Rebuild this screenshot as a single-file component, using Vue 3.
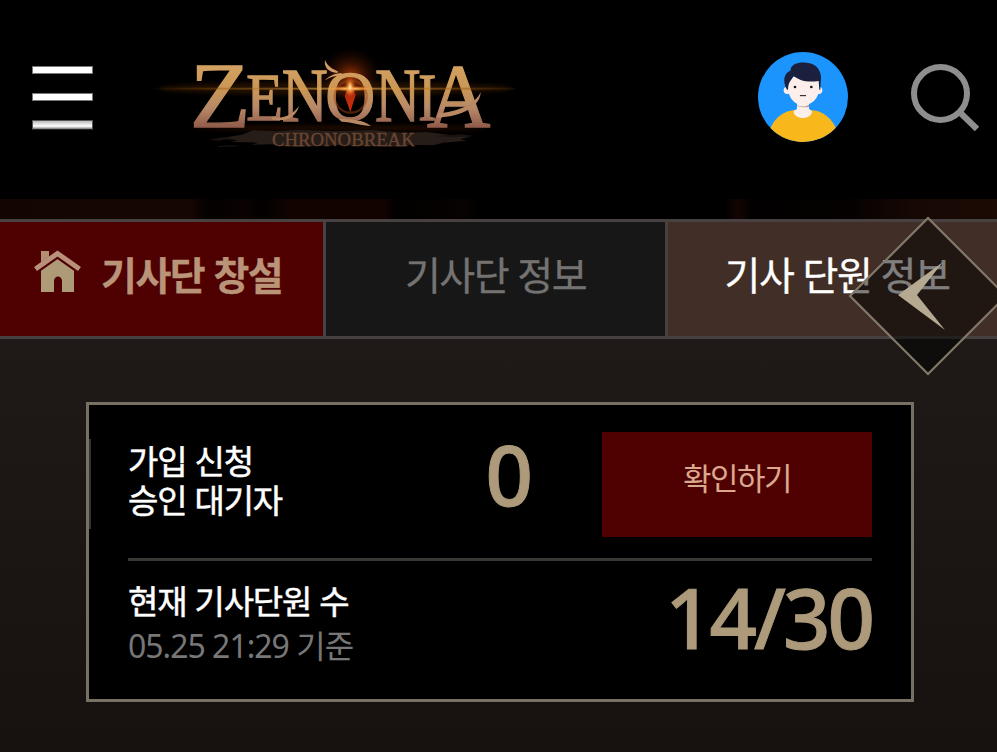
<script setup>
const menuBars = [0, 1, 2]
const letters = [
  { ch: 'Z', x: 134, y: 260, size: 282, w: 182 },
  { ch: 'E', x: 304, y: 239, size: 202, w: 110 },
  { ch: 'N', x: 410, y: 243, size: 226, w: 138 },
  { ch: 'O', x: 541, y: 241, size: 210, w: 150 },
  { ch: 'N', x: 690, y: 243, size: 226, w: 136 },
  { ch: 'I', x: 820, y: 239, size: 202, w: 54 },
  { ch: 'A', x: 846, y: 260, size: 276, w: 190 },
]
</script>

<template>
  <div class="page">
    <header class="header">
      <button class="menu" aria-label="menu">
        <span v-for="b in menuBars" :key="b" class="bar"></span>
      </button>

      <svg class="logo" viewBox="0 0 1140 360">
        <defs>
          <linearGradient id="gold" gradientUnits="userSpaceOnUse" x1="0" y1="75" x2="0" y2="262">
            <stop offset="0" stop-color="#d3a163" />
            <stop offset=".4" stop-color="#c99654" />
            <stop offset=".68" stop-color="#b98a68" />
            <stop offset="1" stop-color="#905b4a" />
          </linearGradient>
          <radialGradient id="fire">
            <stop offset="0" stop-color="#e0500a" stop-opacity=".75" />
            <stop offset=".45" stop-color="#a03205" stop-opacity=".35" />
            <stop offset="1" stop-color="#401000" stop-opacity="0" />
          </radialGradient>
          <radialGradient id="spark">
            <stop offset="0" stop-color="#fff6cc" />
            <stop offset=".35" stop-color="#f9a546" stop-opacity=".8" />
            <stop offset="1" stop-color="#e05a10" stop-opacity="0" />
          </radialGradient>
          <linearGradient id="flare">
            <stop offset="0" stop-color="#6a3804" stop-opacity=".1" />
            <stop offset=".15" stop-color="#8a4b09" stop-opacity=".7" />
            <stop offset=".54" stop-color="#ffc465" />
            <stop offset=".85" stop-color="#9a5a10" stop-opacity=".8" />
            <stop offset="1" stop-color="#6a3804" stop-opacity=".3" />
          </linearGradient>
          <linearGradient id="gem" x1="0" y1="0" x2="0" y2="1">
            <stop offset="0" stop-color="#ff9a50" />
            <stop offset=".4" stop-color="#b02a0c" />
            <stop offset="1" stop-color="#d62c08" />
          </linearGradient>
          <filter id="soft" x="-20%" y="-80%" width="140%" height="260%">
            <feGaussianBlur stdDeviation="7" />
          </filter>
        </defs>

        <ellipse cx="570" cy="145" rx="530" ry="20" fill="#3b1d03" opacity=".55" filter="url(#soft)" />
        <ellipse cx="617" cy="110" rx="95" ry="88" fill="url(#fire)" />
        <ellipse cx="590" cy="264" rx="440" ry="7" fill="#5a2006" opacity=".4" filter="url(#soft)" />

        <path
          d="M245 292l45-8 35-13 70 3 60-5 110 5 120-4 90 8 70-2 70 9 65 5-35 7 20 5-70 6-30 8-70-2-25 6-190-4-125 5-75-8-60 1 20-6-85-2 25-5-40-4z"
          fill="#261d18"
        />
        <path d="M190 299l45-7 30 3-45 7zM215 318l50-2 20 3-60 2zM870 288l75-5 45 5-70 4z" fill="#1a130f" />
        <text class="serif" x="381" y="319" font-size="58" textLength="428" lengthAdjust="spacingAndGlyphs" fill="#6b4531" stroke="#6b4531" stroke-width="1">CHRONOBREAK</text>

        <text class="serif title" fill="url(#gold)" stroke="url(#gold)">
          <tspan
            v-for="(l, i) in letters"
            :key="i"
            :x="l.x"
            :y="l.y"
            :font-size="l.size"
            :textLength="l.w"
            lengthAdjust="spacingAndGlyphs"
          >{{ l.ch }}</tspan>
        </text>

        <g fill="#d19a66">
          <path d="M576 99C552 96 536 84 540 60C548 80 562 86 580 95Z" />
          <path d="M540 121C552 108 568 100 590 99L588 107C566 107 552 113 540 121Z" />
          <path d="M380 231C415 239 446 222 462 197C456 228 424 249 380 238Z" fill="#b98964" />
          <path d="M580 236C620 238 655 238 678 258C650 257 622 246 590 245Z" fill="#b98964" />
          <path d="M882 220C930 216 990 196 1007 156C1006 200 950 230 876 233Z" fill="#b98964" />
        </g>
        <circle cx="617" cy="170" r="48" fill="none" stroke="#9c3f14" stroke-width="7" opacity=".5" />
        <path d="M615 125L632 165L616 216L599 168Z" fill="url(#gem)" />
        <rect x="22" y="143" width="1088" height="6" fill="url(#flare)" opacity=".6" />
        <ellipse cx="616" cy="146" rx="70" ry="9" fill="url(#spark)" />
        <ellipse cx="615" cy="142" rx="17" ry="30" fill="url(#spark)" />
      </svg>

      <svg class="avatar" viewBox="0 0 270 270">
        <defs><clipPath id="round"><circle cx="135" cy="135" r="135" /></clipPath></defs>
        <g clip-path="url(#round)">
          <rect width="270" height="270" fill="#1b95fd" />
          <path d="M34 240C44 200 78 174 114 174H156C193 174 226 200 238 240V270H34Z" fill="#f8b71b" />
          <path d="M107 178C107 205 162 205 162 178L153 170V145H117V170Z" fill="#fcefeb" />
          <path d="M118 160Q136 168 153 158V164Q136 168 118 162Z" fill="#b99b98" />
          <circle cx="88" cy="115" r="11" fill="#fcefeb" />
          <circle cx="182" cy="115" r="11" fill="#fcefeb" />
          <path d="M90 75H184V105C184 140 160 160 136 160C111 160 90 138 90 105Z" fill="#fcefeb" />
          <path d="M87 113C74 88 76 65 97 56C99 35 121 30 145 32C173 33 195 56 188 91L187 113H184L182 87C145 92 120 84 107 71C102 85 91 85 90 113Z" fill="#1c203f" />
          <circle cx="111" cy="105" r="4" fill="#17121a" />
          <circle cx="160" cy="105" r="4" fill="#17121a" />
          <path d="M127 131H143" stroke="#17121a" stroke-width="3" stroke-linecap="round" />
        </g>
      </svg>

      <svg class="search" viewBox="0 0 70 70" fill="none" stroke="#8e8e8e">
        <circle cx="30.500" cy="30.500" r="26.500" stroke-width="6" />
        <path d="M49.500 49L67 66" stroke-width="6.200" />
      </svg>
    </header>

    <div class="backdrop"></div>

    <nav class="tabs">
      <a class="tab create">
        <svg class="home" viewBox="0 0 47 43">
          <path d="M7 1H15V8L7 14Z" fill="#b48e71" />
          <path d="M23.500 7L40 19V42H28V31C28 25 20 25 20 31V42H7V19Z" fill="#af9a78" />
          <path d="M1.500 20.500L23.500 5L45.500 20.500" fill="none" stroke="#4f0101" stroke-width="7" />
          <path d="M1.500 19L23.500 3.500L45.500 19" fill="none" stroke="#b9907a" stroke-width="5" />
        </svg>
        <span>기사단 창설</span>
      </a>
      <a class="tab info"><span>기사단 정보</span></a>
      <a class="tab members">
        <span>기사 단원 정보</span>
        <svg class="back" viewBox="0 0 160 160">
          <path d="M80 2L158 80L80 158L2 80Z" fill="#000" fill-opacity=".5" />
          <path d="M80 2L158 80L80 158L2 80Z" fill="none" stroke="#827969" stroke-width="2.200" />
          <path d="M95 46L50 79L97 114L69 79Z" fill="#b5aa91" />
        </svg>
      </a>
    </nav>

    <main class="content">
      <section class="card">
        <i class="notch"></i>
        <div class="row pending">
          <p class="label">가입 신청<br />승인 대기자</p>
          <strong class="num count">0</strong>
          <button class="check">확인하기</button>
        </div>
        <div class="row total">
          <div>
            <p class="label">현재 기사단원 수</p>
            <p class="date">05.25 21:29 기준</p>
          </div>
          <strong class="num">14/30</strong>
        </div>
      </section>
    </main>
  </div>
</template>

<style>
body {
  background: #000;
  overflow: hidden;
}
</style>

<style scoped>
.page {
  width: 997px;
  height: 752px;
  display: flex;
  flex-direction: column;
  overflow: hidden;
  background: #000;
  font-family: "Noto Sans CJK KR", sans-serif;
}
p {
  margin: 0;
}
button {
  border: 0;
  padding: 0;
  font-family: inherit;
}
.header {
  height: 199px;
  flex: none;
  display: flex;
  align-items: flex-start;
}
.menu {
  width: 61px;
  margin: 66px 0 0 31.500px;
  display: flex;
  flex-direction: column;
  gap: 19px;
  background: none;
}
.bar {
  height: 8px;
  background: #fff;
  border: 1px solid #777;
  box-sizing: border-box;
}
.bar:last-child {
  height: 10px;
  border-color: #555;
  border-bottom-color: #222;
  background: linear-gradient(#bbb, #fff 65%, #777);
}
.logo {
  width: 380px;
  height: 120px;
  margin: 40px 0 0 52.500px;
}
.serif {
  font-family: "Liberation Serif", serif;
}
.title {
  stroke-width: 4px;
}
.avatar {
  width: 90px;
  height: 90px;
  margin: 52px 0 0 233px;
}
.search {
  width: 70px;
  height: 70px;
  margin: 63px 0 0 62px;
}
.backdrop {
  height: 20px;
  flex: none;
  background: linear-gradient(90deg, #130602 0, #160602 190px, #040101 208px, #0a0202 245px, #020000 264px, #120301 290px, #120301 384px, #020000 396px, #080202 465px, #000 480px, #000 725px, #120504 738px, #020000 752px, #050101 850px, #160804 910px, #1c0a04 997px);
}
.tabs {
  flex: none;
  height: 114px;
  display: grid;
  grid-template-columns: 323px 339px 329px;
  gap: 3px;
  border: solid #474241;
  border-width: 3px 0;
  background: #474241;
}
.tab {
  display: flex;
  justify-content: center;
  font-size: 39px;
  line-height: 60px;
  padding-top: 21px;
  letter-spacing: -1.500px;
  word-spacing: 2px;
  white-space: nowrap;
  -webkit-text-stroke: 0.3px currentColor;
}
.create {
  justify-content: flex-start;
  padding-left: 34px;
  gap: 20px;
  background: #4f0101;
  color: #b99478;
  font-weight: 700;
}
.home {
  width: 47px;
  height: 43px;
  margin-top: 7px;
}
.info {
  background: #171717;
  color: #757372;
}
.members {
  position: relative;
  background: #412e27;
  color: #fff;
}
.members span {
  padding-left: 9px;
}
.back {
  position: absolute;
  left: 180px;
  top: -6px;
  width: 160px;
  height: 160px;
}
.content {
  flex: 1;
  padding: 63px 83px 0 86px;
  background: linear-gradient(#1f1a17, #171110);
}
.card {
  position: relative;
  height: 300px;
  box-sizing: border-box;
  padding: 27px 39px 0;
  border: 3px solid #777063;
  background: #000;
}
.notch {
  position: absolute;
  left: 0;
  top: 34px;
  width: 2px;
  height: 90px;
  background: #35352f;
}
.row {
  display: flex;
  align-items: flex-start;
}
.pending {
  height: 126px;
  border-bottom: 3px solid #373834;
}
.label {
  color: #fff;
  font-size: 33px;
  font-weight: 400;
  -webkit-text-stroke: 0.5px #fff;
  line-height: 39px;
  letter-spacing: -1.200px;
  word-spacing: 2px;
  padding-top: 9px;
}
.date {
  color: #777;
  font-family: "Noto Sans", "Noto Sans CJK KR", sans-serif;
  font-size: 32px;
  line-height: 44px;
  letter-spacing: -1px;
  padding-top: 4px;
}
.num {
  font-family: "Noto Sans", sans-serif;
  font-weight: 500;
  font-size: 83px;
  line-height: 90px;
  letter-spacing: -3px;
  color: #ad9a7b;
  -webkit-text-stroke: 1px #ad9a7b;
}
.count {
  margin-left: auto;
  margin-top: -3px;
}
.check {
  width: 270px;
  height: 105px;
  margin-left: 72px;
  padding-bottom: 16px;
  background: #4f0101;
  color: #dba78f;
  font-size: 31px;
  letter-spacing: -1.500px;
}
.total {
  justify-content: space-between;
  padding-top: 11px;
}
</style>
